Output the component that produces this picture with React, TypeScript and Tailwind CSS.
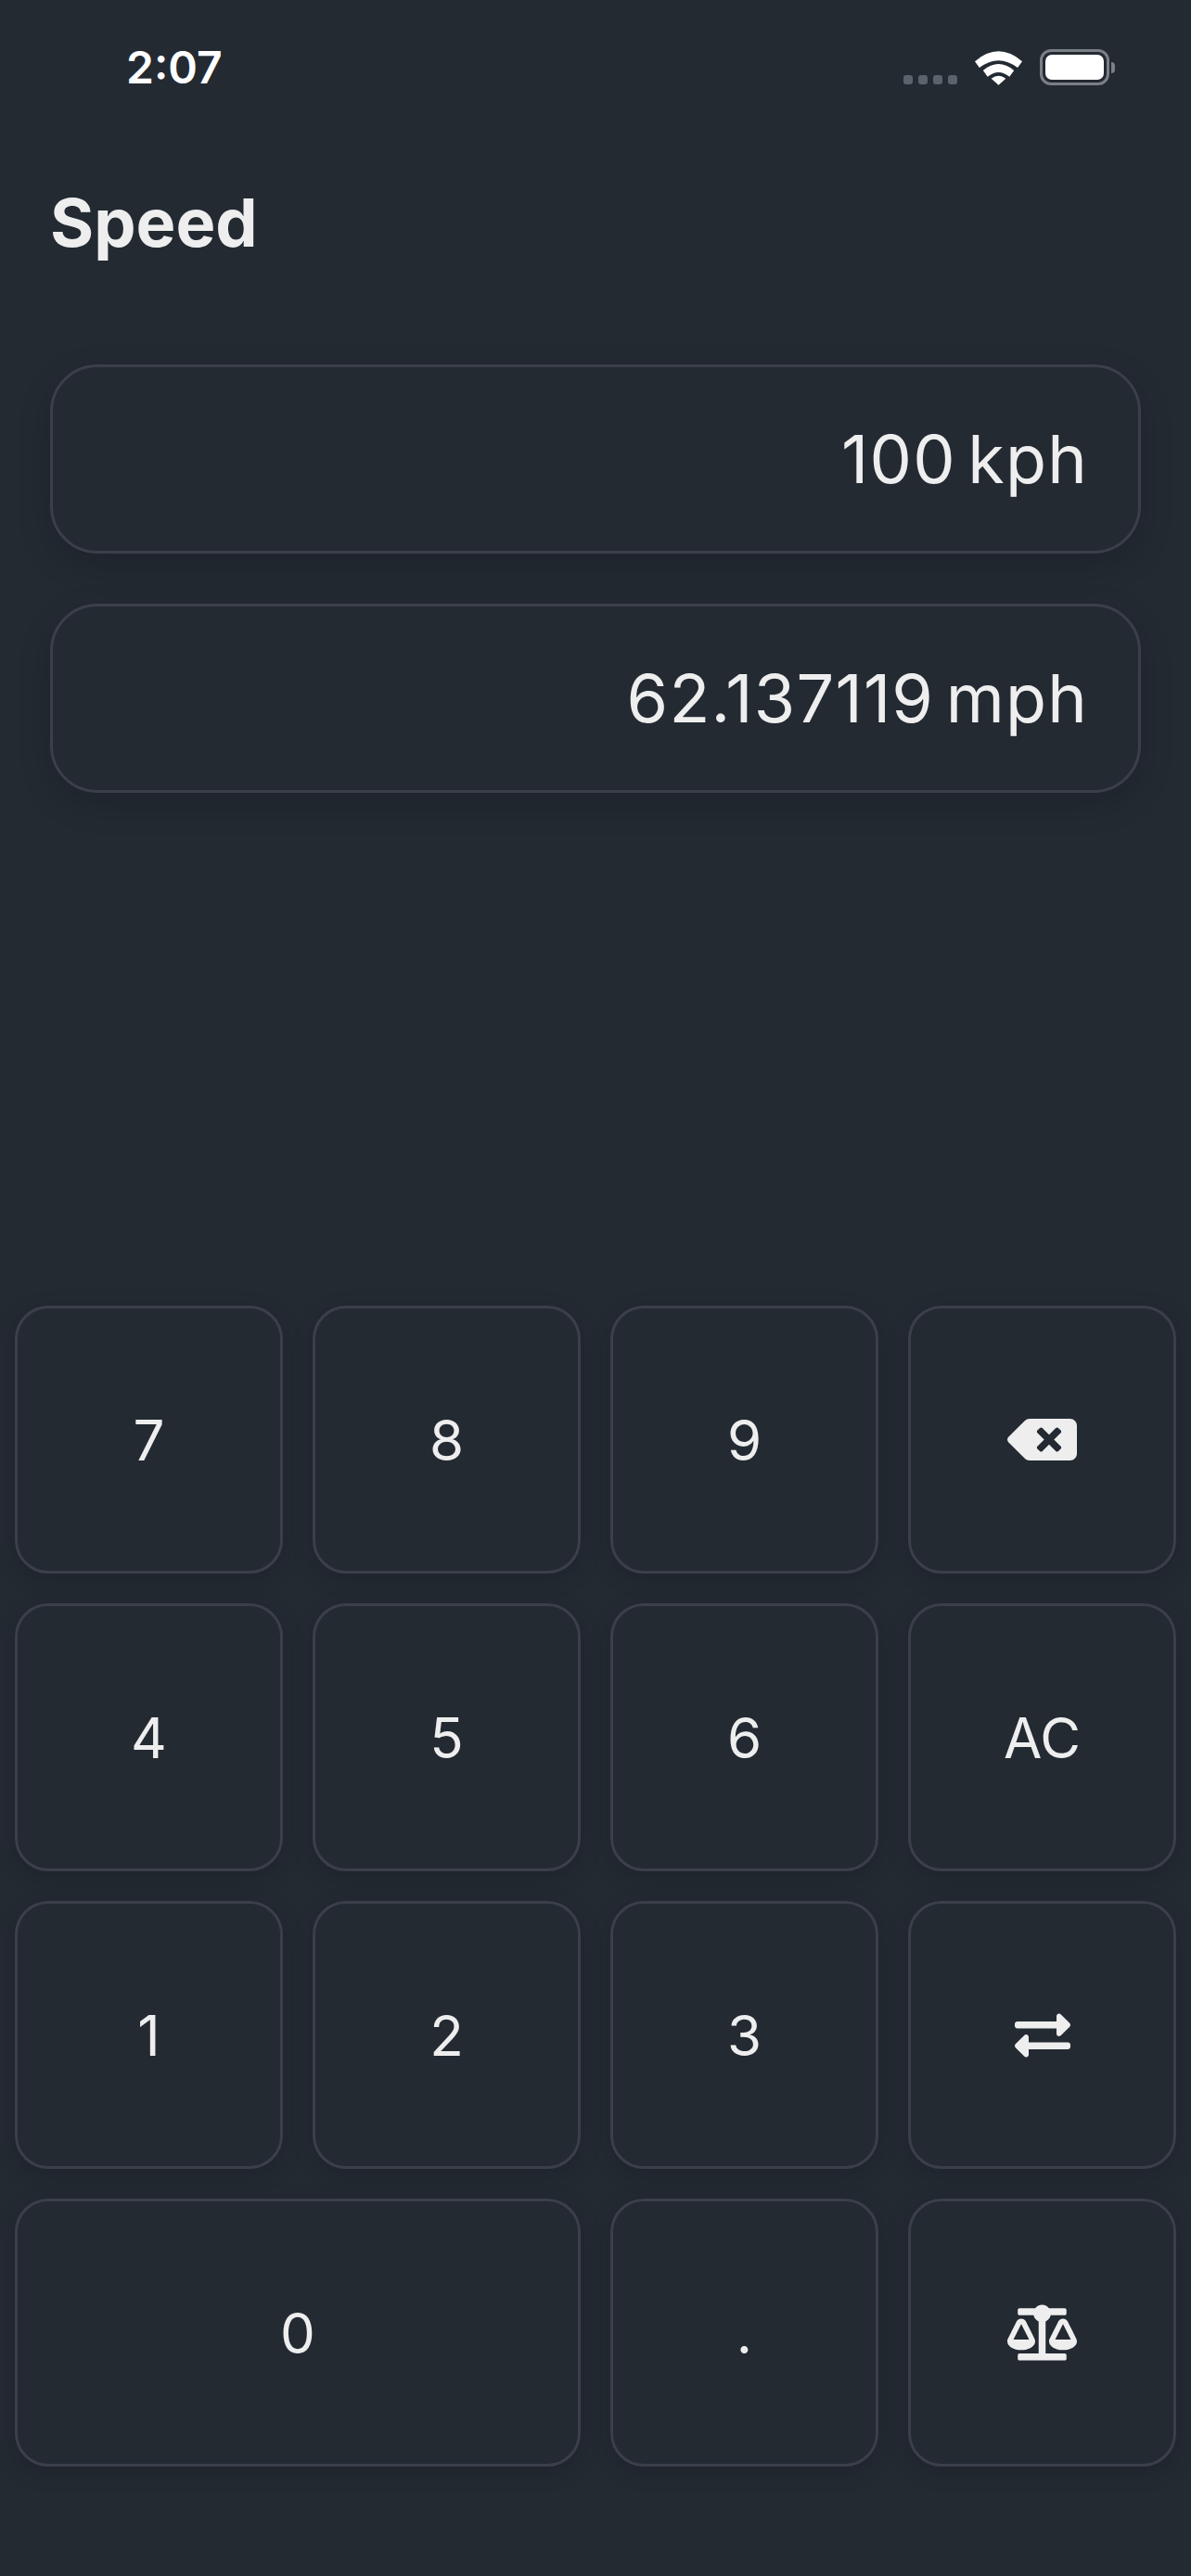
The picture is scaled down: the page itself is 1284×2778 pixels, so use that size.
import type { ReactNode } from "react";
import { FaBackspace, FaBalanceScale, FaExchangeAlt } from "react-icons/fa";

function Field({ children }: { children: ReactNode }) {
  return (
    <div className="h-[204px] flex items-center justify-end pl-[54px] pr-[54px] pb-[1px] rounded-[51px] border-[3px] border-[#3b3f4a] bg-[#232a32] shadow-[0_12px_36px_rgba(0,0,0,0.16)] text-[72px] tracking-[1.2px] [word-spacing:-9px] text-[#eeeeee] font-normal">
      {children}
    </div>
  );
}

function Key({ children, wide }: { children: ReactNode; wide?: boolean }) {
  return (
    <div
      className={`h-[289px] flex items-center justify-center rounded-[36px] border-[3px] border-[#3b3f4a] bg-[#232a32] shadow-[0_6px_24px_rgba(0,0,0,0.16)] text-[60px] font-normal text-[#eeeeee] ${
        wide ? "col-span-2" : ""
      }`}
    >
      {children}
    </div>
  );
}

function StatusIcons() {
  return (
    <div className="flex items-end gap-[19px]">
      <div className="flex gap-[6px] mb-[1px]">
        <span className="w-[10px] h-[10px] rounded-[3px] bg-[#5c626b]" />
        <span className="w-[10px] h-[10px] rounded-[3px] bg-[#5c626b]" />
        <span className="w-[10px] h-[10px] rounded-[3px] bg-[#5c626b]" />
        <span className="w-[10px] h-[10px] rounded-[3px] bg-[#5c626b]" />
      </div>
      <svg width="51" height="38" viewBox="0 0 52 38">
        <path d="M0 12 Q26 -10 52 12 L47 19 Q26 3 5 19 Z" fill="#fff" />
        <path d="M9 22 Q26 8 43 22 L38 29 Q26 19 14 29 Z" fill="#fff" />
        <path d="M18 31 Q26 25 34 31 L26 38 Z" fill="#fff" />
      </svg>
      <div className="flex items-center">
        <div className="w-[75px] h-[39px] rounded-[12px] border-[3px] border-[#7b7f86] p-[3px]">
          <div className="w-full h-full rounded-[7px] bg-white" />
        </div>
        <div className="w-[4px] h-[12px] rounded-r-full bg-[#7b7f86] ml-[2px]" />
      </div>
    </div>
  );
}

export default function App() {
  return (
    <div
      className="w-[1284px] h-[2778px] flex flex-col bg-[#232a32] overflow-hidden"
      style={{ fontFamily: "Inter, 'Noto Sans', sans-serif" }}
    >
      <div className="h-[93px] pt-[53px] pl-[136px] pr-[82px] flex items-start justify-between">
        <span className="text-[48px] leading-[39px] font-semibold text-white">2:07</span>
        <StatusIcons />
      </div>

      <h1 className="mt-[103px] ml-[54px] text-[72px] leading-[87px] font-bold text-[#eeeeee]">Speed</h1>

      <div className="mt-[110px] mx-[54px] flex flex-col gap-[54px]">
        <Field>100 kph</Field>
        <Field>62.137119 mph</Field>
      </div>

      <div className="flex-1" />

      <div className="grid grid-cols-4 gap-[32px] px-[16px] pb-[118px]">
        <Key>7</Key>
        <Key>8</Key>
        <Key>9</Key>
        <Key>
          <FaBackspace size={75} />
        </Key>
        <Key>4</Key>
        <Key>5</Key>
        <Key>6</Key>
        <Key>AC</Key>
        <Key>1</Key>
        <Key>2</Key>
        <Key>3</Key>
        <Key>
          <FaExchangeAlt size={60} />
        </Key>
        <Key wide>0</Key>
        <Key>.</Key>
        <Key>
          <FaBalanceScale size={75} />
        </Key>
      </div>
    </div>
  );
}
